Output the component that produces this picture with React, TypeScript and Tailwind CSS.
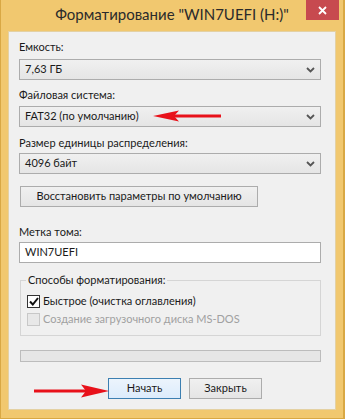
import React from "react";

const font = { fontFamily: 'Lato, "Noto Sans", sans-serif' };

function Chevron() {
  return (
    <svg width="9" height="6" viewBox="0 0 9 6" className="shrink-0">
      <path d="M1 1 L4.5 4.5 L8 1" fill="none" stroke="#555" strokeWidth="1.8" />
    </svg>
  );
}

function Combo({ value }: { value: string }) {
  return (
    <div className="flex h-[21px] items-center justify-between border border-[#acacac] bg-gradient-to-b from-[#f0f0f0] to-[#e5e5e5] pl-[5px] pr-[5px] text-[11px] text-[#1a1a1a]">
      <span>{value}</span>
      <Chevron />
    </div>
  );
}

function Label({ children, className = "" }: { children: React.ReactNode; className?: string }) {
  return <div className={`h-[16px] text-[11px] leading-[16px] text-[#1a1a1a] ${className}`}>{children}</div>;
}

function Btn({ children, focused = false, className = "" }: { children: React.ReactNode; focused?: boolean; className?: string }) {
  return (
    <div
      className={`flex h-[21px] items-center justify-center whitespace-nowrap border bg-gradient-to-b text-[11px] text-[#1a1a1a] ${
        focused ? "border-[#3c7fb1] from-[#ecf4fc] to-[#dcecfc]" : "border-[#acacac] from-[#f0f0f0] to-[#e5e5e5]"
      } ${className}`}
    >
      {children}
    </div>
  );
}

function ArrowLeft() {
  return (
    <svg width="70" height="14" viewBox="0 0 70 14">
      <line x1="20" y1="7" x2="68" y2="7" stroke="#e8111a" strokeWidth="3" />
      <path d="M0 7 L26 1.5 L21 7 L26 12.5 Z" fill="#e8111a" />
    </svg>
  );
}

function ArrowRight() {
  return (
    <svg width="76" height="14" viewBox="0 0 76 14">
      <line x1="1" y1="7" x2="54" y2="7" stroke="#e8111a" strokeWidth="3" />
      <path d="M76 7 L48 0.5 L53 7 L48 13.5 Z" fill="#e8111a" />
    </svg>
  );
}

export default function App() {
  return (
    <div
      className="relative flex h-[419px] w-[345px] flex-col border-l border-r-2 border-b border-[#d9a844] bg-[#f1c86f]"
      style={font}
    >
      {/* Title bar */}
      <div className="grid h-[31px] grid-cols-[1fr_auto_1fr]">
        <div />
        <div className="whitespace-nowrap pt-[4px] text-[15px] leading-[20px] text-[#2b2b2b]">
          Форматирование "WIN7UEFI (H:)"
        </div>
        <div className="flex justify-end pr-[4px]">
          <div className="flex h-[20px] w-[33px] items-center justify-center bg-[#c74a4f]">
            <svg width="9" height="9" viewBox="0 0 9 9">
              <path d="M1 1 L8 8 M8 1 L1 8" stroke="#fff" strokeWidth="1.8" />
            </svg>
          </div>
        </div>
      </div>

      {/* Content */}
      <div className="mx-[7px] mb-[8px] flex flex-1 flex-col border border-[#e4d1a3] bg-[#f0f0f0] pl-[10px] pr-[14px] pt-[7px]">
        <Label>Емкость:</Label>
        <div className="mt-[4px]">
          <Combo value="7,63 ГБ" />
        </div>

        <Label className="mt-[7px]">Файловая система:</Label>
        <div className="mt-[3px]">
          <Combo value="FAT32 (по умолчанию)" />
        </div>

        <Label className="mt-[8px]">Размер единицы распределения:</Label>
        <div className="mt-[2px]">
          <Combo value="4096 байт" />
        </div>

        <Btn className="ml-[1px] mt-[12px] w-[238px]">Восстановить параметры по умолчанию</Btn>

        <Label className="mt-[17px]">Метка тома:</Label>
        <div className="mt-[2px] flex h-[21px] items-center border border-[#acacac] bg-white pl-[5px] text-[11px] text-[#1a1a1a]">
          WIN7UEFI
        </div>

        {/* Group box */}
        <div className="ml-[1px] mt-[9px] flex flex-col">
          <div className="flex h-[16px] items-center">
            <div className="h-[8px] w-[6px] self-end border-l border-t border-[#d5d5d5]" />
            <span className="px-[2px] text-[11px] leading-[16px] text-[#1a1a1a]">Способы форматирования:</span>
            <div className="h-[8px] flex-1 self-end border-r border-t border-[#d5d5d5]" />
          </div>
          <div className="flex h-[48px] flex-col border-x border-b border-[#d5d5d5] pl-[6px] pt-[4px]">
            <div className="flex h-[18px] items-center gap-[3px]">
              <div className="flex h-[13px] w-[13px] items-center justify-center border border-[#333] bg-white">
                <svg width="10" height="9" viewBox="0 0 10 9">
                  <path d="M1 4.5 L3.8 7.5 L9 1" fill="none" stroke="#111" strokeWidth="2" />
                </svg>
              </div>
              <span className="text-[11px] text-[#1a1a1a]">Быстрое (очистка оглавления)</span>
            </div>
            <div className="flex h-[18px] items-center gap-[3px]">
              <div className="h-[13px] w-[13px] border border-[#c8c8c8] bg-[#e8e8e8]" />
              <span className="text-[11px] text-[#a0a0a0]">Создание загрузочного диска MS-DOS</span>
            </div>
          </div>
        </div>

        {/* Progress */}
        <div className="ml-[1px] mt-[14px] h-[12px] border border-[#bcbcbc] bg-[#e6e6e6]" />

        {/* Buttons */}
        <div className="mt-[16px] flex gap-[8px] pl-[89px]">
          <Btn focused className="w-[73px]">Начать</Btn>
          <Btn className="w-[73px]">Закрыть</Btn>
        </div>
      </div>

      {/* Red pointer arrows drawn over the dialog */}
      <div className="absolute left-[152px] top-[109px]">
        <ArrowLeft />
      </div>
      <div className="absolute left-[32px] top-[384px]">
        <ArrowRight />
      </div>
    </div>
  );
}
